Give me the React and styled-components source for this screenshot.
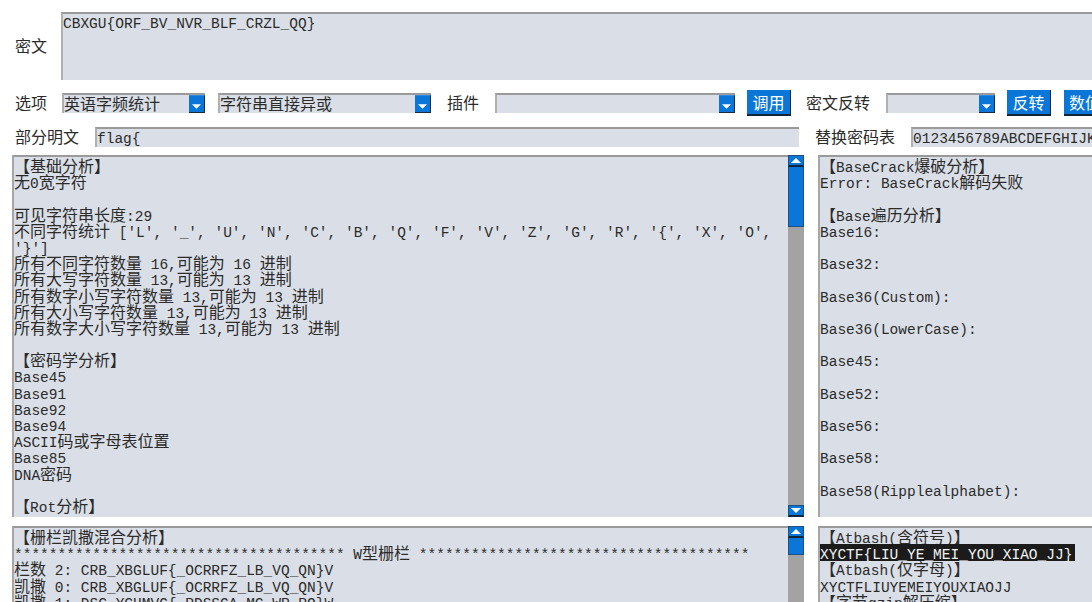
import React from 'react';
import styled, { createGlobalStyle } from 'styled-components';

const Global = createGlobalStyle`
  html, body { margin: 0; padding: 0; background: #fff; overflow: hidden; }
`;

const Page = styled.div`
  width: 1092px;
  height: 602px;
  overflow: hidden;
  padding-top: 12px;
  box-sizing: border-box;
  font-family: "Noto Sans CJK SC", "Liberation Mono", monospace;
  font-size: 16px;
  color: #2b2b2b;
  background: #fff;
`;

const Row = styled.div`
  display: flex;
  align-items: center;
  width: 1400px;
  height: ${p => p.$h}px;
  margin-top: ${p => p.$mt || 0}px;
  padding-left: 15px;
  flex-shrink: 0;
`;

const Label = styled.span`
  flex-shrink: 0;
  margin-left: ${p => p.$ml || 0}px;
  padding-bottom: 2px;
  line-height: 20px;
  white-space: nowrap;
`;

const Latin = styled.span`
  font-family: "Liberation Mono", monospace;
  font-size: 14.5px;
`;

const Field = styled.div`
  box-sizing: border-box;
  flex-shrink: 0;
  width: ${p => p.$w}px;
  height: ${p => p.$h || 20}px;
  margin-left: ${p => p.$ml || 0}px;
  background: #dadfe7;
  border-top: 2px solid #9a9a9a;
  border-left: 2px solid #b0b0b0;
  line-height: 15px;
  padding-left: ${p => p.$pl ?? 0}px;
  white-space: pre;
  overflow: hidden;
`;

const SelectBox = styled.div`
  box-sizing: border-box;
  position: relative;
  flex-shrink: 0;
  width: ${p => p.$w}px;
  height: 20px;
  margin-left: ${p => p.$ml || 0}px;
  background: #dadfe7;
  border-top: 2px solid #9a9a9a;
  border-left: 2px solid #b0b0b0;
  line-height: 16px;
  white-space: pre;
`;

const ArrowButton = styled.span`
  box-sizing: border-box;
  position: absolute;
  right: 0;
  top: 0;
  width: 16px;
  height: 18px;
  display: flex;
  align-items: center;
  justify-content: center;
  background: #0a76d8;
  border-right: 1px solid #1a2b3d;
  border-bottom: 1px solid #1a2b3d;
  border-top: 1px solid #2a8be6;
`;

const Tri = styled.svg`
  display: block;
  width: ${p => p.$w}px;
  height: ${p => Math.ceil(p.$w / 2)}px;
  fill: #fff;
  transform: ${p => (p.$up ? 'none' : 'rotate(180deg)')};
  margin-top: ${p => p.$mt || 0}px;
`;

const Button = styled.button`
  box-sizing: border-box;
  flex-shrink: 0;
  width: ${p => p.$w}px;
  height: 26px;
  margin-left: ${p => p.$ml || 0}px;
  padding: 0;
  background: #0a76d8;
  color: #fff;
  font: inherit;
  line-height: 24px;
  border: 0;
  border-right: 1px solid #12263a;
  border-bottom: 2px solid #12263a;
  white-space: nowrap;
  overflow: hidden;
  text-align: ${p => p.$align || 'center'};
  padding-left: ${p => p.$pl || 0}px;
`;

const Panels = styled.div`
  display: flex;
  width: 1400px;
  height: ${p => p.$h}px;
  margin-top: ${p => p.$mt}px;
  padding-left: 12px;
`;

const Left = styled.div`
  display: flex;
  flex-shrink: 0;
  width: 792px;
  height: 100%;
`;

const Pane = styled.div`
  box-sizing: border-box;
  flex: ${p => (p.$right ? '0 0 400px' : '1 1 auto')};
  margin-left: ${p => (p.$right ? 14 : 0)}px;
  height: 100%;
  overflow: hidden;
  background: #dadfe7;
  border-top: 2px solid #9a9a9a;
  border-left: 2px solid #a6a6a6;
`;

const Line = styled.div`
  height: 16.2px;
  line-height: 16.2px;
  white-space: pre;
`;

const Selected = styled.span`
  display: inline-block;
  background: #1b1b1b;
  color: #f2f2f2;
  height: 17px;
  line-height: 16px;
  padding-right: 3px;
`;

const Track = styled.div`
  flex: 0 0 16px;
  height: 100%;
  display: flex;
  flex-direction: column;
  background: #a3a3a3;
`;

const ArrowCap = styled.div`
  box-sizing: border-box;
  flex: 0 0 ${p => p.$h}px;
  margin-top: ${p => (p.$auto ? 'auto' : '0')};
  display: flex;
  align-items: center;
  justify-content: center;
  background: #0a76d8;
  border: 1px solid #1d4f80;
  border-bottom: 2px solid #10263b;
`;

const Thumb = styled.div`
  box-sizing: border-box;
  flex: 0 0 ${p => p.$h}px;
  background: #0a76d8;
  border-right: 1px solid #1d4f80;
  border-bottom: 1px solid #1d4f80;
  border-left: 1px solid #1d4f80;
`;

const T = ({ children }) => {
  const parts = String(children).split(/([\u0000-\u02ff]+)/).filter(Boolean);
  return parts.map((s, i) =>
    /^[\u0000-\u02ff]/.test(s) ? <Latin key={i}>{s}</Latin> : <React.Fragment key={i}>{s}</React.Fragment>
  );
};

const triangle = '5,0 10,5 0,5';
const Up = () => (
  <Tri $up $w={10} viewBox="0 0 10 5"><polygon points={triangle} /></Tri>
);
const Down = ({ mt, w = 10 }) => (
  <Tri $mt={mt} $w={w} viewBox="0 0 10 5"><polygon points={triangle} /></Tri>
);

const Select = ({ w, ml, children }) => (
  <SelectBox $w={w} $ml={ml}>
    {children ? <T>{children}</T> : null}
    <ArrowButton><Down mt={5} w={9} /></ArrowButton>
  </SelectBox>
);

const Scrollbar = ({ thumb, down }) => (
  <Track>
    <ArrowCap $h={12}><Up /></ArrowCap>
    <Thumb $h={thumb} />
    {down ? <ArrowCap $h={12} $auto><Down /></ArrowCap> : null}
  </Track>
);

const stars = '*'.repeat(38);

const mainLines = [
  '【基础分析】',
  '无0宽字符',
  '',
  '可见字符串长度:29',
  "不同字符统计 ['L', '_', 'U', 'N', 'C', 'B', 'Q', 'F', 'V', 'Z', 'G', 'R', '{', 'X', 'O',",
  "'}']",
  '所有不同字符数量 16,可能为 16 进制',
  '所有大写字符数量 13,可能为 13 进制',
  '所有数字小写字符数量 13,可能为 13 进制',
  '所有大小写字符数量 13,可能为 13 进制',
  '所有数字大小写字符数量 13,可能为 13 进制',
  '',
  '【密码学分析】',
  'Base45',
  'Base91',
  'Base92',
  'Base94',
  'ASCII码或字母表位置',
  'Base85',
  'DNA密码',
  '',
  '【Rot分析】',
];

const crackLines = [
  '【BaseCrack爆破分析】',
  'Error: BaseCrack解码失败',
  '',
  '【Base遍历分析】',
  'Base16:', '',
  'Base32:', '',
  'Base36(Custom):', '',
  'Base36(LowerCase):', '',
  'Base45:', '',
  'Base52:', '',
  'Base56:', '',
  'Base58:', '',
  'Base58(Ripplealphabet):',
];

const railLines = [
  '【栅栏凯撒混合分析】',
  `${stars} W型栅栏 ${stars}`,
  '栏数 2: CRB_XBGLUF{_OCRRFZ_LB_VQ_QN}V',
  '凯撒 0: CRB_XBGLUF{_OCRRFZ_LB_VQ_QN}V',
  '凯撒 1: DSC_YCHMVG{_PDSSGA_MC_WR_RO}W',
];

const Lines = ({ items }) =>
  items.map((l, i) => <Line key={i}><T>{l}</T></Line>);

export default function App() {
  return (
    <>
      <Global />
      <Page>
        <Row $h={68}>
          <Label>密文</Label>
          <Field $w={1100} $h={68} $ml={14}>
            <T>{'CBXGU{ORF_BV_NVR_BLF_CRZL_QQ}'}</T>
          </Field>
        </Row>
        <Row $h={20} $mt={13}>
          <Label>选项</Label>
          <Select w={143} ml={15}>英语字频统计</Select>
          <Select w={213} ml={13}>字符串直接异或</Select>
          <Label $ml={16}>插件</Label>
          <Select w={240} ml={16} />
          <Button $w={44} $ml={12}>调用</Button>
          <Label $ml={15}>密文反转</Label>
          <Select w={109} ml={16} />
          <Button $w={44} $ml={12}>反转</Button>
          <Button $w={60} $ml={13} $align="left" $pl={5}>数值</Button>
        </Row>
        <Row $h={20} $mt={14}>
          <Label>部分明文</Label>
          <Field $w={704} $ml={16}><T>{'flag{'}</T></Field>
          <Label $ml={16}>替换密码表</Label>
          <Field $w={300} $ml={16}><T>0123456789ABCDEFGHIJKLMNOPQRSTUVWXYZ</T></Field>
        </Row>
        <Panels $h={362} $mt={8}>
          <Left>
            <Pane><Lines items={mainLines} /></Pane>
            <Scrollbar thumb={60} down />
          </Left>
          <Pane $right><Lines items={crackLines} /></Pane>
        </Panels>
        <Panels $h={100} $mt={9}>
          <Left>
            <Pane><Lines items={railLines} /></Pane>
            <Scrollbar thumb={17} />
          </Left>
          <Pane $right>
            <Line><T>【Atbash(含符号)】</T></Line>
            <Line><Selected><T>{'XYCTF{LIU_YE_MEI_YOU_XIAO_JJ}'}</T></Selected></Line>
            <Line><T>【Atbash(仅字母)】</T></Line>
            <Line><T>XYCTFLIUYEMEIYOUXIAOJJ</T></Line>
            <Line><T>【字节gzip解压缩】</T></Line>
          </Pane>
        </Panels>
      </Page>
    </>
  );
}
